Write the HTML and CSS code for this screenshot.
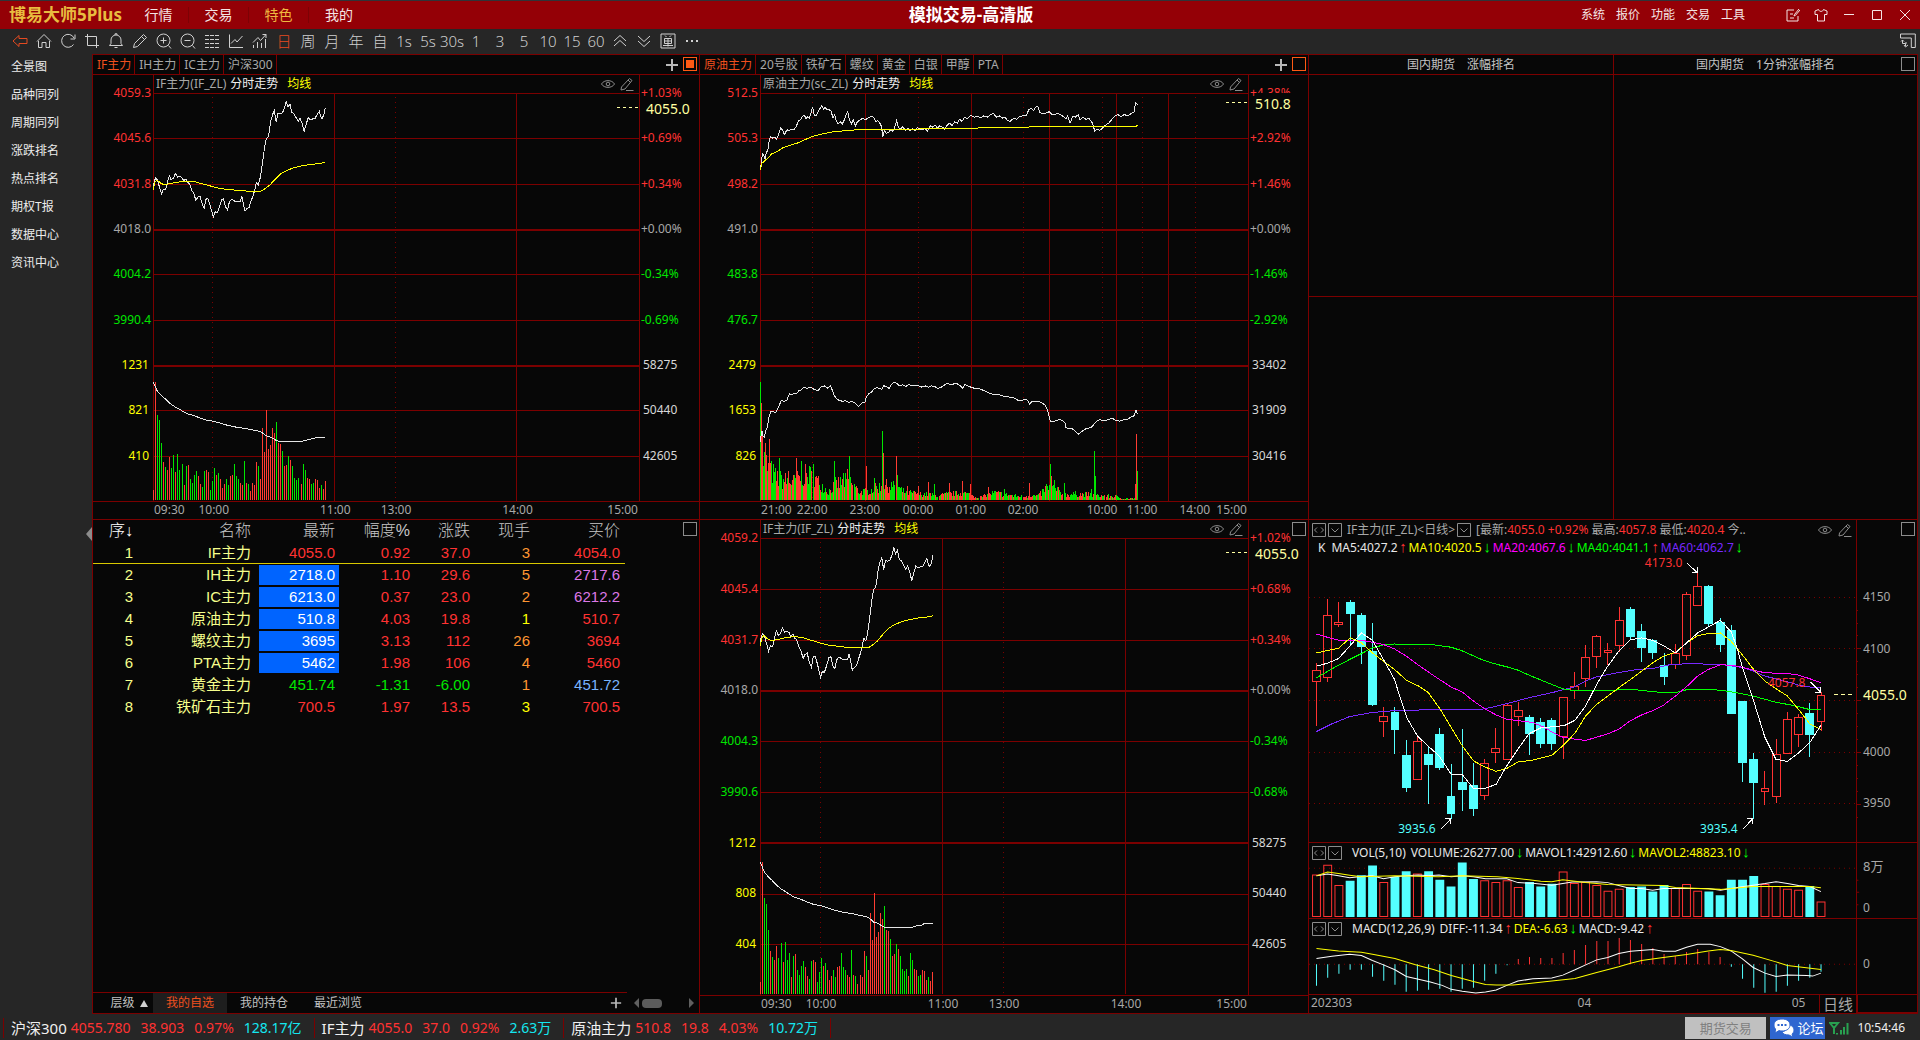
FILE: index.html
```html
<!DOCTYPE html>
<html lang="zh-CN">
<head>
<meta charset="utf-8">
<meta name="viewport" content="width=device-width, initial-scale=1">
<title>模拟交易-高清版</title>
<link rel="stylesheet" href="styles.css">
</head>
<body>
<svg class="symbols" aria-hidden="true">
  <symbol id="eye" viewBox="0 0 14 14"><path d="M.5 7C3 2.500 11 2.500 13.500 7 11 11.500 3 11.500.5 7Z"/><circle cx="7" cy="7" r="1.800"/></symbol>
  <symbol id="pencil" viewBox="0 0 14 14"><path d="M1.500 10 9.500 1.500l2.500 2L5 12l-4 1 .5-3M8 3l2.500 2.500M6 13.500h7.500"/></symbol>
  <symbol id="swap" viewBox="0 0 14 14"><path d="M.5.500h13v13H.5zM5 4.500 2.500 7 5 9.500M9 4.500 11.500 7 9 9.500"/></symbol>
  <symbol id="drop" viewBox="0 0 14 14"><path d="M.5.500h13v13H.5zM3.500 5.500 7 9l3.500-3.500"/></symbol>
  <symbol id="plus" viewBox="0 0 14 14"><path d="M7 1v12M1 7h12"/></symbol>
</svg>

<header class="titlebar">
  <h1 class="logo">博易大师5Plus</h1>
  <nav class="menu">
    <a href="#">行情</a><a href="#">交易</a><a href="#" class="on">特色</a><a href="#">我的</a>
  </nav>
  <div class="window-title">模拟交易-高清版</div>
  <nav class="submenu">
    <a href="#">系统</a><a href="#">报价</a><a href="#">功能</a><a href="#">交易</a><a href="#">工具</a>
  </nav>
  <div class="winbtns">
    <button aria-label="反馈"><svg viewBox="0 0 14 14"><path d="M8 2H1v11h11V8M4 6h3M4 10h4M13 1 8.500 6.500 8 8l1.500-.7L14 2"/></svg></button>
    <button aria-label="皮肤"><svg viewBox="0 0 14 14"><path d="M4.500 1.500 1 3v3.500h2.500V13h7V6.500H13V3L9.500 1.500C9 4 5 4 4.500 1.500Z"/></svg></button>
    <button aria-label="最小化"><svg viewBox="0 0 14 14"><path d="M2 6.500h10"/></svg></button>
    <button aria-label="最大化"><svg viewBox="0 0 14 14"><path d="M2.500 2.500h9v9h-9z"/></svg></button>
    <button aria-label="关闭"><svg viewBox="0 0 14 14"><path d="m2 2 10 10M12 2 2 12"/></svg></button>
  </div>
</header>

<div class="toolbar">
  <button class="on" aria-label="返回"><svg viewBox="0 0 16 16"><path d="M1 8l6-5.500V5.500h8v5H7v3z"/></svg></button>
  <button aria-label="主页"><svg viewBox="0 0 16 16"><path d="M1 8.500 8 1.500l7 7M2.500 8v6.500H6V9.500h4v5h3.500V8"/></svg></button>
  <button aria-label="刷新"><svg viewBox="0 0 16 16"><path d="M13.500 11.500A6.500 6.500 0 1 1 14 5M15 1.500V6h-4.500"/></svg></button>
  <button aria-label="裁剪"><svg viewBox="0 0 16 16"><path d="M3.500 1v11.500H15M1 3.500h11.500V15"/></svg></button>
  <button aria-label="提醒"><svg viewBox="0 0 16 16"><path d="M1.500 12.500h13L13 10.500V7a5 5 0 0 0-10 0v3.500zM7 2V.8h2V2M6.500 14.500h3"/></svg></button>
  <button aria-label="画线"><svg viewBox="0 0 16 16"><path d="m1.500 14.500 1-4 9-9 3 3-9 9zM9.500 3.500l3 3"/></svg></button>
  <button aria-label="放大"><svg viewBox="0 0 16 16"><circle cx="7.500" cy="7.500" r="6.500"/><path d="M4.500 7.500h6M7.500 4.500v6M12.500 12.500 15 15.500"/></svg></button>
  <button aria-label="缩小"><svg viewBox="0 0 16 16"><circle cx="7.500" cy="7.500" r="6.500"/><path d="M4.500 7.500h6M12.500 12.500 15 15.500"/></svg></button>
  <button aria-label="列表"><svg viewBox="0 0 16 16"><path stroke-dasharray="4 1" d="M1 2.500h14M1 6.500h14M1 10.500h14M1 14.500h14"/></svg></button>
  <button aria-label="分时"><svg viewBox="0 0 16 16"><path d="M1.500 1.500v13H15M3 10.500l4-4 2 2.500 5.500-6"/></svg></button>
  <button aria-label="指标"><svg viewBox="0 0 16 16"><path d="M1.500 12v3M5.500 9v6M9.500 10v5M13.500 6v9M1 9.500l5-5 2.500 3L14 1.500M10.500 1.500H14V5"/></svg></button>
  <button class="on">日</button><button>周</button><button>月</button><button>年</button><button>自</button>
  <button>1s</button><button>5s</button><button>30s</button><button>1</button><button>3</button><button>5</button><button>10</button><button>15</button><button>60</button>
  <button aria-label="上"><svg viewBox="0 0 16 16"><path d="M2 8l6-5.500L14 8M2 13l6-5.500 6 5.500"/></svg></button>
  <button aria-label="下"><svg viewBox="0 0 16 16"><path d="M2 3l6 5.500L14 3M2 8l6 5.500L14 8"/></svg></button>
  <button aria-label="画面"><svg viewBox="0 0 16 16"><path d="M1 1h14v14H1zM5 2.500l1.500 1.500M11 2.500 9.500 4M4.500 5.500h7v5h-7zM4.500 8h7M8 5.500v8M3 12.500h10"/></svg></button>
  <button aria-label="更多"><svg viewBox="0 0 16 16"><path stroke-width="2" d="M2 8h2M7 8h2M12 8h2"/></svg></button>
  <button class="last" aria-label="布局"><svg viewBox="0 0 16 16"><path d="M.5 1h14.800v13.500h-4V5H.5zM2.500 7v3.500h3V13M1 8.500 2.500 7 4 8.500M4 12l1.500 2L8 12M7 10H5"/></svg></button>
</div>

<div class="workspace">
  <nav class="sidebar">
    <a href="#">全景图</a><a href="#">品种同列</a><a href="#">周期同列</a><a href="#">涨跌排名</a><a href="#">热点排名</a><a href="#">期权T报</a><a href="#">数据中心</a><a href="#">资讯中心</a>
    <button class="collapse" aria-label="收起"></button>
  </nav>

  <main class="panels">
    <section class="panel">
      <div class="tabs">
        <button class="on">IF主力</button><button>IH主力</button><button>IC主力</button><button>沪深300</button>
        <svg class="add"><use href="#plus"/></svg><i class="corner hot full"></i>
      </div>
      <div class="chart">
        <div class="axis left"><span class="up">4059.3</span><span class="up">4045.6</span><span class="up">4031.8</span><span>4018.0</span><span class="dn">4004.2</span><span class="dn">3990.4</span><span class="vol">1231</span><span class="vol">821</span><span class="vol">410</span></div>
        <div class="plot">
          <div class="caption">IF主力(IF_ZL) <b>分时走势</b><em>均线</em><svg><use href="#eye"/></svg><svg><use href="#pencil"/></svg></div>
          <svg class="canvas" data-chart="index" preserveAspectRatio="none"></svg>
        </div>
        <div class="axis right"><span class="up">+1.03%</span><span class="up">+0.69%</span><span class="up">+0.34%</span><span>+0.00%</span><span class="dn">-0.34%</span><span class="dn">-0.69%</span><span class="oi">58275</span><span class="oi">50440</span><span class="oi">42605</span><strong class="last-price" style="top:3.8%">4055.0</strong></div>
        <div class="times"><span class="first">09:30</span><span style="left:12.5%">10:00</span><span style="left:37.5%">11:00</span><span style="left:50%">13:00</span><span style="left:75%">14:00</span><span class="end">15:00</span></div>
      </div>
    </section>

    <section class="panel">
      <div class="tabs">
        <button class="on">原油主力</button><button>20号胶</button><button>铁矿石</button><button>螺纹</button><button>黄金</button><button>白银</button><button>甲醇</button><button>PTA</button>
        <svg class="add"><use href="#plus"/></svg><i class="corner hot"></i>
      </div>
      <div class="chart">
        <div class="axis left"><span class="up">512.5</span><span class="up">505.3</span><span class="up">498.2</span><span>491.0</span><span class="dn">483.8</span><span class="dn">476.7</span><span class="vol">2479</span><span class="vol">1653</span><span class="vol">826</span></div>
        <div class="plot">
          <div class="caption">原油主力(sc_ZL) <b>分时走势</b><em>均线</em><svg><use href="#eye"/></svg><svg><use href="#pencil"/></svg></div>
          <svg class="canvas" data-chart="crude" preserveAspectRatio="none"></svg>
        </div>
        <div class="axis right"><span class="up">+4.38%</span><span class="up">+2.92%</span><span class="up">+1.46%</span><span>+0.00%</span><span class="dn">-1.46%</span><span class="dn">-2.92%</span><span class="oi">33402</span><span class="oi">31909</span><span class="oi">30416</span><strong class="last-price" style="top:2.8%">510.8</strong></div>
        <div class="times"><span class="first">21:00</span><span style="left:10.7%">22:00</span><span style="left:21.5%">23:00</span><span style="left:32.4%">00:00</span><span style="left:43.2%">01:00</span><span style="left:53.9%">02:00</span><span style="left:70.1%">10:00</span><span style="left:78.3%">11:00</span><span style="left:89.1%">14:00</span><span class="end">15:00</span></div>
      </div>
    </section>

    <section class="panel ranks">
      <h2>国内期货<span>涨幅排名</span></h2><h2>国内期货<span>1分钟涨幅排名</span></h2>
      <div></div><div></div><div></div><div></div>
      <i class="corner"></i>
    </section>

    <section class="panel watch">
      <table>
        <thead><tr><th class="c-seq">序↓</th><th class="c-name">名称</th><th class="c-last">最新</th><th class="c-pct">幅度%</th><th class="c-chg">涨跌</th><th class="c-vol">现手</th><th class="c-bid">买价</th></tr></thead>
        <tbody>
          <tr class="current"><td>1</td><td>IF主力</td><td class="up">4055.0</td><td class="up">0.92</td><td class="up">37.0</td><td class="lot">3</td><td class="up">4054.0</td></tr>
          <tr><td>2</td><td>IH主力</td><td class="flash">2718.0</td><td class="up">1.10</td><td class="up">29.6</td><td class="lot">5</td><td class="violet">2717.6</td></tr>
          <tr><td>3</td><td>IC主力</td><td class="flash">6213.0</td><td class="up">0.37</td><td class="up">23.0</td><td class="lot">2</td><td class="violet">6212.2</td></tr>
          <tr><td>4</td><td>原油主力</td><td class="flash">510.8</td><td class="up">4.03</td><td class="up">19.8</td><td class="vol">1</td><td class="up">510.7</td></tr>
          <tr><td>5</td><td>螺纹主力</td><td class="flash">3695</td><td class="up">3.13</td><td class="up">112</td><td class="lot">26</td><td class="up">3694</td></tr>
          <tr><td>6</td><td>PTA主力</td><td class="flash">5462</td><td class="up">1.98</td><td class="up">106</td><td class="lot">4</td><td class="up">5460</td></tr>
          <tr><td>7</td><td>黄金主力</td><td class="dn">451.74</td><td class="dn">-1.31</td><td class="dn">-6.00</td><td class="lot">1</td><td class="sky">451.72</td></tr>
          <tr><td>8</td><td>铁矿石主力</td><td class="up">700.5</td><td class="up">1.97</td><td class="up">13.5</td><td class="vol">3</td><td class="up">700.5</td></tr>
        </tbody>
      </table>
      <div class="sheets">
        <button>层级 <i class="tri"></i></button><button class="on">我的自选</button><button>我的持仓</button><button>最近浏览</button>
        <svg class="add"><use href="#plus"/></svg>
        <div class="scroller"><i></i><b></b><i></i></div>
      </div>
      <i class="corner"></i>
    </section>

    <section class="panel">
      <div class="chart">
        <div class="axis left"><span class="up">4059.2</span><span class="up">4045.4</span><span class="up">4031.7</span><span>4018.0</span><span class="dn">4004.3</span><span class="dn">3990.6</span><span class="vol">1212</span><span class="vol">808</span><span class="vol">404</span></div>
        <div class="plot">
          <div class="caption">IF主力(IF_ZL) <b>分时走势</b><em>均线</em><svg><use href="#eye"/></svg><svg><use href="#pencil"/></svg></div>
          <svg class="canvas" data-chart="index" preserveAspectRatio="none"></svg>
        </div>
        <div class="axis right"><span class="up">+1.02%</span><span class="up">+0.68%</span><span class="up">+0.34%</span><span>+0.00%</span><span class="dn">-0.34%</span><span class="dn">-0.68%</span><span class="oi">58275</span><span class="oi">50440</span><span class="oi">42605</span><strong class="last-price" style="top:3.6%">4055.0</strong></div>
        <div class="times"><span class="first">09:30</span><span style="left:12.5%">10:00</span><span style="left:37.5%">11:00</span><span style="left:50%">13:00</span><span style="left:75%">14:00</span><span class="end">15:00</span></div>
      </div>
      <i class="corner"></i>
    </section>

    <section class="panel kline">
      <div class="pane main-pane">
        <div class="pane-body">
          <div class="pane-head"><svg><use href="#swap"/></svg><svg><use href="#drop"/></svg><span>IF主力(IF_ZL)&lt;日线&gt;</span><svg><use href="#drop"/></svg><span class="quote">[最新:<b class="up">4055.0 +0.92%</b> 最高:<b class="up">4057.8</b> 最低:<b class="up">4020.4</b> 今..</span><svg class="eye"><use href="#eye"/></svg><svg><use href="#pencil"/></svg></div>
          <div class="ma-row"><span>K</span><p><b>MA5:4027.2<i class="au">↑</i></b><b class="ye">MA10:4020.5<i class="ad">↓</i></b><b class="mg">MA20:4067.6<i class="ad">↓</i></b><b class="gr">MA40:4041.1<i class="au">↑</i></b><b class="pu">MA60:4062.7<i class="ad">↓</i></b></p></div>
          <div class="stage">
            <svg class="canvas" data-chart="candles" preserveAspectRatio="none"></svg>
            <span class="mark up" style="left:61.4%;top:1.9%">4173.0</span>
            <span class="mark cy" style="left:16.3%;top:95.5%">3935.6</span>
            <span class="mark cy" style="left:71.5%;top:95.5%">3935.4</span>
            <span class="mark up" style="left:83.9%;top:44%">4057.8</span>
          </div>
        </div>
        <div class="scale"><span style="top:24%">4150</span><span style="top:40%">4100</span><strong style="top:54.5%">4055.0</strong><span style="top:72%">4000</span><span style="top:88%">3950</span></div>
      </div>
      <div class="pane">
        <div class="pane-body">
          <div class="pane-head"><svg><use href="#swap"/></svg><svg><use href="#drop"/></svg><p><b>VOL(5,10)</b> <b>VOLUME:26277.00<i class="ad">↓</i></b><b>MAVOL1:42912.60<i class="ad">↓</i></b><b class="ye">MAVOL2:48823.10<i class="ad">↓</i></b></p></div>
          <div class="stage"><svg class="canvas" data-chart="volume" preserveAspectRatio="none"></svg></div>
        </div>
        <div class="scale"><span class="wan" style="top:31%">8万</span><span style="top:87%">0</span></div>
      </div>
      <div class="pane">
        <div class="pane-body">
          <div class="pane-head"><svg><use href="#swap"/></svg><svg><use href="#drop"/></svg><p><b>MACD(12,26,9)</b> <b>DIFF:-11.34<i class="au">↑</i></b><b class="ye">DEA:-6.63<i class="ad">↓</i></b><b>MACD:-9.42<i class="au">↑</i></b></p></div>
          <div class="stage"><svg class="canvas" data-chart="macd" preserveAspectRatio="none"></svg></div>
        </div>
        <div class="scale boxed"><span style="top:60%">0</span></div>
      </div>
      <div class="dates"><div><span class="first">202303</span><span style="left:54%">04</span><span style="left:96%">05</span></div><button>日线</button><i class="rest"></i></div>
      <i class="corner"></i>
    </section>
  </main>
</div>

<footer class="status">
  <div class="ticker"><b>沪深300</b><span class="up">4055.780</span><span class="up">38.903</span><span class="up">0.97%</span><span class="aq">128.17亿</span></div>
  <div class="ticker"><b>IF主力</b><span class="up">4055.0</span><span class="up">37.0</span><span class="up">0.92%</span><span class="aq">2.63万</span></div>
  <div class="ticker"><b>原油主力</b><span class="up">510.8</span><span class="up">19.8</span><span class="up">4.03%</span><span class="aq">10.72万</span></div>
  <button class="trade">期货交易</button>
  <button class="forum"><svg viewBox="0 0 22 20"><path d="M13 7c5-1 8 2 8 5 0 2-1 3-2 4l1 3-4-2c-4 0-6-1-7-3 4-1 6-4 4-7Z"/><path d="M9 1c5 0 8 2.500 8 6s-3 6-8 6c-1 0-2 0-3-.4L2 15l.6-4C1.500 10 1 8.700 1 7c0-3.500 3-6 8-6Z"/><path class="dots" d="M4.500 7h2M8 7h2M11.500 7h2"/></svg>论坛</button>
  <svg class="signal" viewBox="0 0 20 14"><path d="M1 2h8L5 7zM5 7v6M8 12v1.500M12 9v4.500M15 6v7.500M18.500 2v11.500"/></svg>
  <time>10:54:46</time>
</footer>
<script src="charts.js"></script>
</body>
</html>
```
FILE: styles.css
```css
* { box-sizing: border-box; }
:root {
  --line: #7b0000;
  --bg: #070707;
  --chrome: #262626;
  --up: #ff3232;
  --dn: #00e600;
  --grey: #a8a8a8;
}
body {
  margin: 0;
  min-height: 100vh;
  display: flex;
  flex-direction: column;
  background: var(--chrome);
  color: #d8d8d8;
  font: 12px/16px "Noto Sans", "Noto Sans CJK SC", sans-serif;
}
button { margin: 0; padding: 0; border: 0; background: none; color: inherit; font: inherit; }
a { color: inherit; text-decoration: none; }
h1, h2, p { margin: 0; font-size: inherit; font-weight: inherit; }
i, em { font-style: normal; }
b, strong { font-weight: 400; }
svg { fill: none; stroke: currentColor; stroke-width: 1; display: block; flex: none; }
.symbols { position: absolute; width: 0; height: 0; }

.up { color: var(--up); }
.dn { color: var(--dn); }
.vol, .ye { color: #ffff00; }

/* title bar */
.titlebar {
  position: relative;
  display: flex;
  align-items: center;
  height: 29px;
  border-top: 1px solid #303338;
  background: #940006;
  color: #f4e4e4;
}
.logo { width: 116px; margin-left: 9px; color: #e8bc40; font-size: 17px; font-weight: 700; white-space: nowrap; }
.menu { display: flex; flex: 1; margin-left: 4px; font-size: 14px; }
.menu a { width: 60px; text-align: center; border-right: 1px solid #7c0205; }
.menu a:last-child { border: 0; }
.menu .on { color: #efb840; }
.window-title { position: absolute; left: 0; right: 0; text-align: center; font-size: 17px; font-weight: 700; color: #fff; pointer-events: none; padding-left: 22px; }
.submenu { display: flex; gap: 11px; }
.winbtns { display: flex; gap: 14px; margin: 0 8px 0 41px; }
.winbtns svg { width: 14px; height: 14px; }

/* tool bar */
.toolbar { display: flex; height: 24px; padding-left: 8px; font-size: 15px; font-weight: 300; line-height: 24px; color: #d0d0d0; }
.toolbar button { display: flex; justify-content: center; align-items: center; width: 24px; flex: none; }
.toolbar svg { width: 16px; height: 16px; }
.toolbar .on { color: #e44a20; }
.toolbar .last { margin-left: auto; }

.workspace { flex: 1; display: flex; padding: 1px 2px 1px 0; }
.sidebar { position: relative; width: 92px; flex: none; display: flex; flex-direction: column; }
.sidebar a { height: 28px; padding-left: 11px; line-height: 26px; color: #ececec; }
.collapse { position: absolute; right: 0; top: 50%; width: 6px; height: 14px; background: #8c8c8c; clip-path: polygon(100% 0, 0 50%, 100% 100%); transform: translateY(-50%); }

.panels {
  flex: 1;
  display: grid;
  grid-template-columns: 607fr 609fr 609fr;
  grid-template-rows: 465fr 494fr;
  border-top: 1px solid var(--line);
  border-left: 1px solid var(--line);
  background: var(--bg);
}
.panel {
  position: relative;
  display: flex;
  flex-direction: column;
  min-width: 0;
  border-right: 1px solid var(--line);
  border-bottom: 1px solid var(--line);
}
.corner { position: absolute; right: 2px; top: 2px; width: 14px; height: 14px; border: 1px solid #8c8c8c; }
.corner.hot { border-color: #ff5a14; }
.corner.full { background: #ff5a14 content-box; padding: 2px; }

.tabs { display: flex; height: 20px; padding-right: 20px; border-bottom: 1px solid var(--line); line-height: 19px; color: var(--grey); }
.tabs button { padding: 0 3px 0 4px; border-right: 1px solid var(--line); }
.tabs .on { color: #f0501e; }
.add { width: 14px; height: 14px; margin: 3px 0 0 auto; stroke: #b8b8b8; stroke-width: 2; }

/* intraday charts */
.chart { flex: 1; display: grid; grid-template: 18px 1fr 18px / 60px 1fr 59px; }
.plot { grid-area: 1 / 2 / 3 / 3; display: grid; grid-template-rows: 18px 1fr; border: solid var(--line); border-width: 0 1px; min-width: 0; }
.canvas { width: 100%; height: 100%; min-height: 0; overflow: visible; shape-rendering: crispEdges; }
.canvas path { vector-effect: non-scaling-stroke; }
.plot > .canvas { height: 0; min-height: 100%; }
.caption { display: flex; align-items: center; gap: 4px; padding: 0 5px 0 2px; color: var(--grey); }
.caption b { color: #f0f0f0; }
.caption em { flex: 1; padding-left: 5px; color: #ffff00; }
.caption svg { width: 14px; height: 14px; stroke: #8c8c8c; }
.caption svg + svg { margin-left: 1px; }
.axis { grid-row: 2; position: relative; display: grid; grid-auto-rows: 1fr; color: var(--grey); }
.axis span { height: 0; line-height: 0; }
.axis .up { color: var(--up); }
.axis .dn { color: var(--dn); }
.axis .vol { color: #ffff00; }
.axis .oi { color: #d8d8d8; padding-left: 2px; }
.axis.left { text-align: right; padding-right: 2px; }
.axis.left .vol { padding-right: 2px; }
.axis.right { grid-column: 3; padding-left: 1px; }
.last-price { position: absolute; left: 6px; font-size: 14px; line-height: 22px; color: #ffffa0; background: var(--bg); transform: translateY(-50%); }
.last-price::before { content: ""; position: absolute; right: 100%; top: 9px; width: 22px; margin-right: 7px; height: 1px; background: repeating-linear-gradient(90deg, #ffffa0 0 3px, transparent 3px 6px); }
.times { grid-area: 3 / 1 / 4 / 4; position: relative; border: solid transparent; border-width: 1px 60px 0; border-image: linear-gradient(var(--line), var(--line)) 1 / 1px 0 0 0; color: var(--grey); }
.times span { position: absolute; top: 0; transform: translateX(-50%); }
.times .first { left: 1px; transform: none; }
.times .end { right: 1px; transform: none; }

/* rankings */
.ranks { display: grid; grid-template: 20px 1fr 1fr / 305fr 303fr; }
.ranks h2 { display: flex; justify-content: center; gap: 12px; line-height: 19px; color: #c4c4c4; }
.ranks h2, .ranks div { border: solid var(--line); border-width: 0 1px 1px 0; }
.ranks > :nth-child(even) { border-right: 0; }
.ranks div:nth-child(n+5) { border-bottom: 0; }

/* watch list */
.watch table { width: 532px; table-layout: fixed; border-spacing: 0; font: 15px/18px "Liberation Sans", "Noto Sans CJK SC", sans-serif; }
th, td { height: 22px; padding: 0 4px 0 0; border: solid transparent; border-width: 1px 0; text-align: right; font-weight: 400; white-space: nowrap; }
th { font-size: 16px; color: #c8c8c8; font-weight: 300; }
td:first-child, td:nth-child(2) { color: #f6ff8c; }
td:nth-child(2) { font-size: 15px; }
td:nth-child(2), th:nth-child(2) { padding-right: 8px; }
.c-seq { width: 44px; color: #fff; } .c-name { width: 122px; } .c-last { width: 80px; }
.c-pct { width: 75px; } .c-chg, .c-vol { width: 60px; } .c-bid { width: 91px; }
td:last-child, th:last-child { padding-right: 5px; }
.current td { border-bottom-color: #d8c800; }
.flash { background: #0064ff padding-box; color: #fff; }
.lot { color: #ff9632; } .violet { color: #dc78e6; } .sky { color: #78b4ff; }
.sheets { display: flex; height: 21px; margin-top: auto; color: #c0c0c0; line-height: 20px; position: relative; border-top: 1px solid transparent; }
.sheets::before { content: ""; position: absolute; left: 0; top: -1px; width: 534px; height: 1px; background: var(--line); }
.sheets button { width: 74px; }
.sheets button:first-child { width: 60px; padding-left: 12px; }
.sheets .on { background: #1e1e1e; color: #f0501e; }
.tri { display: inline-block; margin-left: 2px; border: 4px solid transparent; border-bottom: 7px solid #d0d0d0; border-top: 0; }
.sheets .add { width: 12px; }
.scroller { display: flex; align-items: center; justify-content: space-between; width: 60px; margin: 0 5px 0 12px; }
.scroller i { border: 5px solid transparent; border-left: 0; border-right-color: #606060; }
.scroller i:last-child { transform: scaleX(-1); }
.scroller b { width: 20px; height: 9px; margin: 0 auto 0 3px; border-radius: 4px; background: #5c5c5c; }

/* daily chart */
.kline { color: #e8e8e8; }
.pane { height: 76px; display: flex; border-bottom: 1px solid var(--line); }
.main-pane { flex: 1; height: auto; }
.pane-body { flex: 1; min-width: 0; display: flex; flex-direction: column; border-right: 1px solid var(--line); }
.pane-head { display: flex; align-items: center; height: 20px; padding-left: 3px; gap: 2px; white-space: nowrap; }
.pane-head svg { width: 14px; height: 14px; stroke: #8c8c8c; }
.pane-head p { padding-left: 8px; }
.pane-head > span { padding-left: 3px; color: var(--grey); }
.quote { flex: 1; }
.pane-head .eye { margin-right: 4px; }
.pane-head .eye + svg { margin-right: 4px; }
.ma-row { display: flex; gap: 6px; padding-left: 9px; height: 18px; line-height: 16px; white-space: nowrap; }
.ma-row p, .pane-head p { display: flex; }
.pane-head p b:first-child { margin-right: 5px; }
.kline p i { display: inline-block; width: 11px; font: 700 15px/14px "DejaVu Sans", sans-serif; font-family: "Liberation Sans", sans-serif; text-align: center; }
.au { color: var(--up); } .ad { color: #00ff00; }
.mg { color: #ff00ff; } .gr { color: #00ff00; } .pu { color: #7828ff; } .cy { color: #54ffff; }
.stage { position: relative; flex: 1; min-height: 0; }
.stage .canvas { position: absolute; inset: 0; }
.mark { position: absolute; transform: translateY(-50%); }
.scale { position: relative; width: 60px; flex: none; color: var(--grey); }
.scale span, .scale strong { position: absolute; left: 6px; transform: translateY(-50%); }
.scale strong { font-size: 14px; color: #ffffa0; }
.scale .wan { font-size: 13px; }
.boxed { outline: 1px solid var(--line); }
.dates { display: flex; height: 18px; color: var(--grey); }
.dates div { position: relative; flex: 1; }
.dates span { position: absolute; top: 0; transform: translateX(-50%); }
.dates .first { left: 2px; transform: none; }
.dates button { width: 38px; border: solid var(--line); border-width: 0 1px; font-size: 15px; }
.rest { width: 60px; border: 1px solid var(--line); border-width: 0 0 1px 1px; }

/* status bar */
.status { display: flex; align-items: center; height: 25px; padding: 0 15px 0 3px; font-size: 14px; }
.ticker { display: flex; gap: 10px; padding: 0 12px 0 7px; border-left: 1px solid var(--line); line-height: 20px; white-space: nowrap; }
.ticker b { margin-right: -6px; font-size: 15px; color: #f0f0f0; }
.ticker:nth-of-type(3) { border-right: 1px solid var(--line); }
.aq { color: #14e6f0; }
.trade { width: 81px; height: 22px; margin-left: auto; background: #c0c0c0; color: #808080; font-size: 13px; }
.forum { display: flex; align-items: center; gap: 2px; width: 55px; height: 22px; margin: 0 4px; padding-left: 3px; background: #2f66d0; color: #fff; font-size: 13px; white-space: nowrap; }
.forum svg { width: 22px; height: 20px; fill: #fff; stroke: #2f66d0; }
.forum .dots { stroke: #2f66d0; stroke-width: 2; }
.signal { width: 20px; height: 14px; stroke: #28a050; stroke-width: 2; }
.status time { margin-left: 8px; font-size: 12px; color: #f0f0f0; }
```
FILE: charts.js
```js
const NS = 'http://www.w3.org/2000/svg';
const RED = '#ff3c32', GREEN = '#00e600', CYAN = '#54ffff', LINE = '#7b0000', WHITE = '#e6e6e6';

function draw(parent, d, stroke, opts = {}) {
  const p = document.createElementNS(NS, 'path');
  p.setAttribute('d', d);
  p.setAttribute('stroke', stroke);
  for (const k in opts) p.setAttribute(k, opts[k]);
  parent.appendChild(p);
}
function group(parent, transform) {
  const g = document.createElementNS(NS, 'g');
  g.setAttribute('transform', transform);
  parent.appendChild(g);
  return g;
}
const line = s => 'M' + s.trim().split(/\s+/).join('L');

function frame(svg, x0, w, solid, dotted) {
  svg.setAttribute('viewBox', `${x0} 279.5 ${w} 1224`);
  for (let i = 0; i < 9; i++) {
    draw(svg, `M${x0} ${281 + i * 136}h${w}`, LINE, { 'stroke-width': i === 3 || i === 6 ? 2 : 1 });
  }
  solid.forEach(x => draw(svg, `M${x} 281V1502`, LINE));
  dotted.forEach(x => draw(svg, `M${x} 290V1502`, LINE, { 'stroke-dasharray': '1 4' }));
}

const charts = {
  index(svg) {
    frame(svg, 335.5, 1058, [730, 1127], [464, 863]);
    const vol = '630r 307r 405g 420g 489g 546r 561g 570r 531r 564g 525g 576r 522g 570g 552g 615r 558g 555r 597g 610g 585g 573g 588r 612r 621g 573g 570r 576r 630g 603g 564g 585r 579g 597r 624r 612r 597g 615g 588r 585r 552g 588g 597g 609r 615r 543g 609r 612g 633r 609r 615r 546r 558g 597r 444r 516r 390r 507r 495r 444r 459r 426g 490r 492r 513g 558r 555r 528g 540r 558g 594g 600g 594g 612r 552g 570g 594r 597r 612g 609g 597r 600r 624r 615g 627r 603r';
    const g = group(svg, 'translate(0 840)');
    vol.split(' ').forEach((v, i) => draw(g, `M${(335 + i * 4.4).toFixed(1)} 660V${parseInt(v)}`, v.endsWith('r') ? RED : GREEN));
    draw(g, line('334,308 338,320 343,335 350,345 360,357 370,370 380,380 388,386 398,394 408,402 420,406 435,414 450,421 465,424 480,430 495,436 515,442 535,446 550,450 565,454 573,460 580,468 590,472 600,480 606,484 630,484 660,484 672,479 685,476 690,472 709,472'), WHITE);
    draw(svg, line('334,560 336,545 339,535 343,540 347,560 352,582 356,568 361,570 365,545 369,528 373,540 378,535 382,520 387,532 391,530 396,532 400,542 405,538 409,548 413,552 418,572 422,580 427,602 431,592 436,588 440,610 445,626 449,598 453,596 457,612 461,632 465,652 469,636 473,640 478,622 483,600 487,596 491,620 496,630 500,606 505,598 509,602 514,606 518,604 523,606 527,590 530,608 534,634 538,626 543,622 547,605 551,590 555,572 559,548 563,555 567,535 570,510 573,480 577,440 580,418 584,412 587,395 590,365 594,345 598,332 602,365 606,340 611,342 616,338 620,325 624,305 628,322 632,312 636,338 640,340 645,352 650,364 654,355 659,372 663,394 668,370 672,354 677,360 682,357 687,355 691,345 696,335 699,350 702,356 706,345 709,324'), WHITE);
    draw(svg, line('334,570 337,548 342,540 350,550 358,555 368,552 380,549 395,545 412,544 425,546 440,552 455,557 470,563 485,567 500,569 520,572 540,574 568,574 576,568 588,556 600,538 612,522 625,512 640,504 655,499 675,494 692,492 709,488'), '#ffff00');
  },

  crude(svg) {
    frame(svg, 173.5, 1194, [430, 690, 882, 1045, 1173], [300, 560, 817, 1011, 1108, 1238]);
    const g = group(svg, 'translate(-1.4 990) scale(.985 1)');
    // typical bar height along the session, then the single large trades
    const env = [[176, 160], [190, 125], [200, 100], [215, 75], [240, 65], [260, 62], [280, 80], [300, 85], [320, 60], [345, 28], [365, 55], [400, 65], [420, 28], [440, 28], [480, 50], [515, 45], [530, 28], [560, 22], [620, 16], [680, 24], [720, 10], [760, 24], [820, 12], [870, 16], [890, 45], [910, 38], [930, 20], [970, 20], [1010, 16], [1060, 12], [1080, 4], [1115, 6]];
    let seed = 7;
    const rnd = () => (seed = seed * 16807 % 2147483647) / 2147483647;
    let e = 0;
    for (let x = 177; x < 1115; x += 2.55) {
      while (e < env.length - 2 && env[e + 1][0] < x) e++;
      const t = (x - env[e][0]) / (env[e + 1][0] - env[e][0]);
      const h = (env[e][1] * (1 - t) + env[e + 1][1] * t) * (0.45 + rnd() * 0.85);
      draw(g, `M${x.toFixed(1)} 510v${-h.toFixed(0)}`, rnd() < 0.5 ? RED : GREEN);
    }
    '176,156g 178,220r 181,303r 189,338r 198,328r 201,400r 223,385g 245,423r 265,385r 279,394g 307,402g 360,394g 382,430g 399,378g 392,416r 439,408r 479,303g 482,370r 461,444g 503,457g 514,378r 518,435g 541,468r 570,468r 594,457r 610,462g 646,460r 680,454r 700,462r 745,472r 784,478g 845,459r 899,402g 901,437r 907,450g 934,459g 1000,478g 1007,364g 1009,437g 1109,462r 1111,312r 1114,423g'
      .split(' ').forEach(s => {
        const [x, y] = s.split(',');
        draw(g, `M${x} 510V${parseInt(y)}`, y.endsWith('r') ? RED : GREEN);
      });
    draw(g, line('176,335 178,315 180,303 183,320 186,322 190,300 194,290 197,262 202,245 208,246 214,248 220,235 228,212 235,214 242,212 248,192 254,195 260,190 266,192 272,182 278,180 284,172 292,176 298,172 305,175 312,180 320,182 326,172 332,170 337,168 343,175 350,168 354,178 360,198 366,206 372,212 380,214 388,213 396,218 404,214 412,220 420,230 428,220 436,218 440,200 446,192 452,188 458,178 464,174 472,175 478,178 483,168 490,170 497,176 502,164 508,158 515,160 522,168 530,165 538,170 546,164 554,168 562,166 570,168 578,172 586,168 594,172 602,168 610,170 618,176 626,172 634,166 642,160 650,165 658,162 666,162 674,168 680,175 685,164 692,168 700,172 710,176 718,175 728,180 738,185 748,192 758,193 768,194 778,198 788,200 798,202 808,205 818,212 826,212 834,208 842,212 846,222 852,215 868,215 876,218 884,225 890,238 894,255 898,276 906,275 914,272 920,268 928,272 934,278 936,294 952,296 960,305 968,313 976,305 984,298 992,295 1000,292 1006,284 1012,275 1020,270 1036,272 1052,265 1060,272 1070,274 1080,270 1090,268 1098,262 1106,258 1111,242 1114,252'), WHITE);
    draw(svg, line('172,510 174,490 177,462 180,465 183,478 187,455 190,455 194,420 197,410 202,415 207,412 212,418 216,405 222,385 227,392 231,404 237,390 243,392 249,388 255,388 260,380 265,364 270,360 275,350 279,345 284,356 288,350 292,355 296,340 300,322 304,346 309,346 314,334 318,326 322,318 327,328 331,322 335,330 340,330 345,332 350,355 354,345 358,362 363,372 368,366 373,372 378,360 382,345 386,335 390,358 395,372 400,360 405,378 410,365 415,362 422,355 430,360 438,352 445,350 450,352 455,366 459,362 464,368 469,380 472,410 476,392 480,400 486,398 491,390 496,394 501,384 506,362 510,382 516,388 521,380 527,392 533,385 539,394 545,386 551,392 557,384 563,388 570,390 576,386 582,394 588,378 594,382 600,375 606,384 612,378 618,382 624,388 630,376 636,370 642,378 648,366 655,370 660,358 666,365 672,354 680,355 688,346 696,352 704,350 712,354 720,348 728,352 736,345 743,340 750,352 758,348 766,355 772,352 778,362 784,365 792,356 800,358 808,350 816,348 824,346 830,330 836,325 842,332 847,322 852,320 857,338 862,340 868,342 874,338 880,336 885,342 892,346 900,340 908,345 915,350 921,358 925,348 931,370 938,350 944,352 951,345 956,360 962,352 970,358 978,356 986,370 992,394 998,388 1004,392 1011,384 1018,376 1026,370 1033,360 1040,350 1048,344 1056,350 1064,344 1072,348 1080,342 1088,336 1092,308 1097,314'), WHITE);
    draw(svg, line('172,510 176,490 190,475 200,462 212,456 228,443 245,436 262,430 280,420 300,410 320,403 350,396 385,392 430,388 500,388 635,387 640,385 780,384 785,382 880,381 885,379 1094,379 1097,376'), '#ffff00');
  },

  candles(svg) {
    svg.setAttribute('viewBox', '22 144 1388 856');
    [262, 418, 574, 730, 884].forEach(y => draw(svg, `M22 ${y}H1410`, LINE, { 'stroke-dasharray': '1 4' }));
    for (let y = 301, i = 0; y < 950; y += 39, i++) draw(svg, `M1410 ${y}h${i % 4 === 3 ? 12 : 6}`, LINE);
    // colour, body top, body bottom, high, low
    const data = 'r484,517,460,650 r316,503,267,518 r337,345,276,353 c279,312,270,408 c318,410,309,462 c426,585,340,590 r622,637,594,683 c611,660,592,735 c738,837,693,848 r697,812,684,812 c735,765,713,885 c675,774,655,783 c864,915,765,930 c822,842,660,906 c831,900,762,921 r763,860,750,872 r718,730,657,762 r589,751,582,751 r604,622,579,650 c624,672,618,738 c639,702,627,717 c633,702,627,723 r565,682,562,750 r532,542,489,570 r445,506,405,534 r382,442,375,477 r424,430,399,465 r331,407,291,426 c300,380,291,391 c366,414,342,456 c393,429,387,447 c469,501,429,528 r433,466,402,480 r253,439,246,450 r229,287,189,287 c231,342,225,348 c339,405,324,426 c363,612,345,612 c576,759,576,819 c750,822,732,930 r838,848,786,888 r736,863,690,882 r631,733,609,733 r625,676,615,714 c612,675,582,744 r559,637,548,666';
    data.split(' ').forEach((s, i) => {
      const [a, b, hi, lo] = s.slice(1).split(',').map(Number);
      const x = 41 + i * 28.45, col = s[0] === 'r' ? '#ff3232' : CYAN;
      draw(svg, `M${x} ${hi}V${a}M${x} ${b}V${lo}`, col);
      draw(svg, `M${x - 10} ${a}h20V${b}h-20z`, col, { fill: s[0] === 'r' ? 'none' : CYAN });
    });
    draw(svg, line('41,667 80,644 125,622 180,610 239,604 269,604 320,601 455,601 490,593 524,583 580,565 638,550 697,532 724,515 752,502 808,489 850,481 894,477 940,465 980,463 1060,464 1093,469 1121,474 1149,485 1179,500 1236,517 1264,527 1293,533 1321,535'), '#7828ff');
    draw(svg, line('41,505 100,465 155,432 183,415 211,406 239,403 260,405 340,406 383,413 411,424 439,439 466,453 497,464 524,472 552,482 580,497 638,525 666,538 694,544 850,541 921,550 952,550 980,541 1050,541 1080,545 1107,550 1149,560 1207,579 1250,588 1293,601 1321,601'), '#00ff00');
    draw(svg, line('41,373 69,383 97,392 155,392 183,398 211,405 239,418 269,440 300,467 340,500 383,533 411,548 439,575 470,600 497,617 524,630 552,634 590,640 620,655 638,668 666,684 697,690 724,694 752,684 780,674 808,660 838,634 866,617 894,604 921,588 952,560 980,532 1008,500 1035,480 1066,466 1093,467 1121,473 1149,482 1179,490 1236,492 1264,497 1293,508 1321,520'), '#ff00ff');
    draw(svg, line('41,430 97,416 127,384 155,400 183,430 211,455 239,480 269,512 300,530 325,550 355,600 383,655 411,710 439,755 466,773 497,787 524,778 552,759 590,753 638,739 666,710 697,672 724,620 752,585 780,560 808,535 838,510 866,485 894,460 921,440 952,428 980,400 1008,378 1035,372 1066,370 1093,395 1121,435 1149,478 1179,515 1207,538 1236,560 1264,600 1293,644 1321,661'), '#ffff00');
    draw(svg, line('41,470 69,461 97,447 125,410 155,370 183,392 211,450 239,510 252,560 270,625 297,680 325,712 352,740 383,796 411,797 439,838 470,838 497,826 524,770 552,720 580,674 610,656 638,653 670,649 697,633 724,590 752,525 780,470 808,425 838,390 866,385 894,392 921,408 952,430 980,400 1008,370 1035,352 1066,332 1093,366 1107,410 1121,470 1135,520 1149,570 1179,685 1207,751 1236,757 1264,732 1293,700 1321,648'), '#ffffff');
    draw(svg, 'M982 160L1007 188M993 188H1007V172M358 960L382 930M368 930H382V946M1124 960L1148 930M1134 930H1148V946M1295 518L1320 548M1306 548H1320V532', '#ffffff');
    draw(svg, 'M1353 556H1406', '#ffffa0', { 'stroke-dasharray': '4 3' });
  },

  volume(svg) {
    svg.setAttribute('viewBox', '22 81 1388 171');
    draw(svg, 'M22 97H1416', LINE, { 'stroke-dasharray': '1 4' });
    draw(svg, 'M1410 135h6M1410 172h8M1410 211h6', LINE);
    '118r 88r 151r 138c 121c 90c 142r 126c 108c 115r 108c 135c 156c 81c 132c 136r 142r 136r 157r 142c 156c 147c 109r 145r 142r 151r 169r 163r 157c 156c 171c 151c 160r 148r 169r 171c 183c 135c 135c 123c 148r 154r 163r 166r 154c 202r'
      .split(' ').forEach((s, i) => {
        const x = 41 + i * 28.45, up = s.endsWith('r');
        draw(svg, `M${x - 10} ${parseInt(s)}h20V247h-20z`, up ? '#ff3232' : CYAN, { fill: up ? 'none' : CYAN });
      });
    draw(svg, line('41,121 69,115 97,121 125,127 155,123 183,121 211,130 239,124 269,121 300,118 325,121 352,118 383,124 411,121 439,124 470,130 524,130 552,142 590,144 638,150 690,140 752,139 780,142 808,151 838,160 866,160 894,166 921,160 1035,160 1066,166 1093,160 1121,155 1149,150 1179,145 1207,139 1236,145 1264,151 1293,154 1321,170'), '#ffffff');
    draw(svg, line('41,121 69,109 97,114 125,119 155,124 240,121 350,124 411,121 500,124 552,129 580,133 610,138 638,139 666,133 697,138 724,142 780,148 921,151 952,157 1066,163 1121,157 1149,154 1293,154 1321,158'), '#ffff00');
  },

  macd(svg) {
    svg.setAttribute('viewBox', '22 315 1388 166');
    draw(svg, 'M22 391H1410', LINE, { 'stroke-dasharray': '1 4' });
    [456, 432, 420, 408, 408, 429, 441, 453, 474, 471, 468, 465, 474, 465, 462, 441, 420, 394, 375, 369, 372, 372, 357, 348, 333, 321, 321, 312, 318, 330, 342, 360, 366, 354, 345, 354, 369, 399, 435, 462, 477, 474, 456, 441, 432, 414]
      .forEach((y, i) => draw(svg, `M${41 + i * 28.45} 391V${y}`, y < 391 ? '#ff3232' : CYAN));
    draw(svg, line('41,374 80,367 125,361 155,365 183,380 211,393 240,408 269,428 297,436 330,445 360,455 383,467 411,473 445,478 470,475 497,469 524,455 552,442 590,435 638,433 666,424 697,408 724,393 752,378 780,371 808,359 838,352 894,347 921,352 952,352 980,340 1008,331 1040,331 1066,338 1093,351 1121,374 1149,401 1179,418 1207,428 1236,424 1285,425 1300,427 1321,418'), '#ffffff');
    draw(svg, line('41,344 97,351 155,355 183,361 240,374 290,392 340,408 383,425 439,443 470,452 497,454 540,454 580,449 638,442 697,434 752,416 808,399 838,388 866,380 921,371 980,362 1035,351 1066,347 1093,350 1149,364 1207,384 1236,395 1321,407'), '#ffff00');
  }
};

document.querySelectorAll('[data-chart]').forEach(svg => charts[svg.dataset.chart](svg));
```
